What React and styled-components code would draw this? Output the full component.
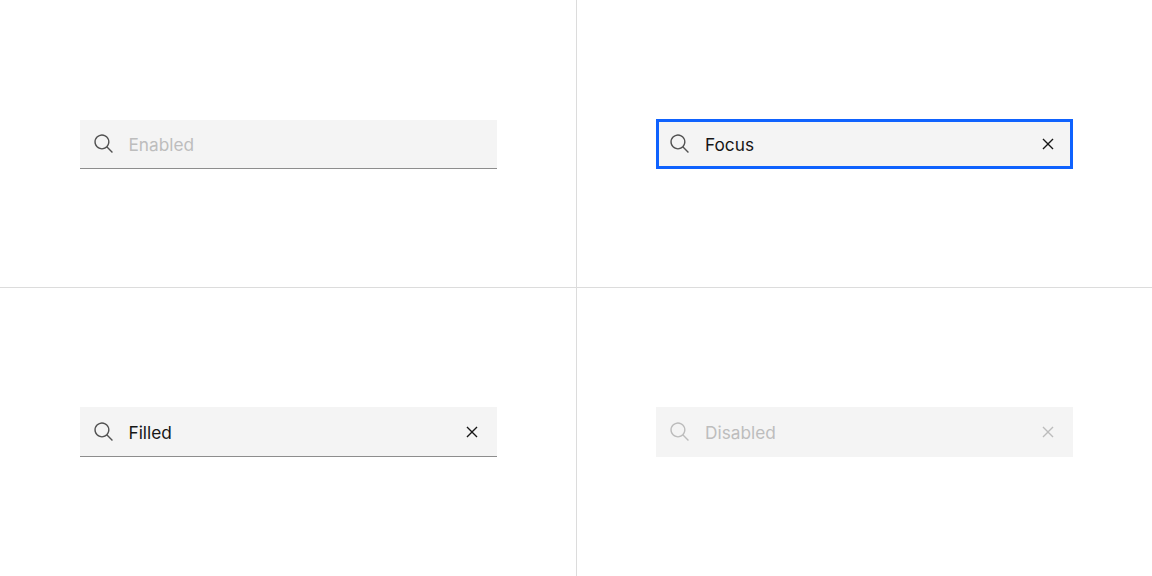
import styled, { createGlobalStyle } from "styled-components";

const GlobalStyle = createGlobalStyle`
  html, body {
    margin: 0;
    padding: 0;
    background: #fff;
    font-family: "Inter", "Liberation Sans", sans-serif;
  }
`;

const Board = styled.div`
  display: grid;
  grid-template-columns: 577px 575px;
  grid-template-rows: 288px 288px;
  width: 1152px;
  height: 576px;
  overflow: hidden;
`;

const Cell = styled.div`
  display: flex;
  align-items: center;
  justify-content: center;
  box-sizing: border-box;
  border-right: ${(p) => (p.$right ? "1px solid #dcdcdc" : "none")};
  border-bottom: ${(p) => (p.$bottom ? "1px solid #dcdcdc" : "none")};
  padding-top: ${(p) => (p.$bottom ? "1px" : "0")};
`;

const Field = styled.div`
  display: flex;
  align-items: center;
  box-sizing: border-box;
  width: 417px;
  height: ${(p) => (p.$tall ? "50px" : "49px")};
  padding: 0 14px 0 13px;
  background: #f4f4f4;
  box-shadow: ${(p) => (p.$underline ? "inset 0 -1px 0 #8d8d8d" : "none")};
  outline: ${(p) => (p.$focus ? "3px solid #0f62fe" : "none")};
  outline-offset: -3px;
`;

const SearchIcon = styled.svg`
  flex: none;
  width: 22px;
  height: 22px;
  fill: ${(p) => (p.$disabled ? "#bcbcbc" : "#525252")};
`;

const CloseIcon = styled.svg`
  flex: none;
  width: 22px;
  height: 22px;
  fill: ${(p) => (p.$disabled ? "#bcbcbc" : "#161616")};
`;

const Label = styled.span`
  flex: 1;
  margin-left: 14px;
  padding-top: 1px;
  font-size: 17.25px;
  line-height: 24px;
  color: ${(p) => (p.$muted ? "#bdbdbd" : "#161616")};
`;

const Search = ({ disabled }) => (
  <SearchIcon $disabled={disabled} viewBox="0 0 32 32">
    <path d="M29 27.586l-7.552-7.552a11.018 11.018 0 1 0-1.414 1.414L27.586 29zM4 13a9 9 0 1 1 9 9 9.01 9.01 0 0 1-9-9z" />
  </SearchIcon>
);

const Close = ({ disabled }) => (
  <CloseIcon $disabled={disabled} viewBox="0 0 32 32">
    <path d="M24 9.4L22.6 8 16 14.6 9.4 8 8 9.4 14.6 16 8 22.6 9.4 24 16 17.4 22.6 24 24 22.6 17.4 16 24 9.4z" />
  </CloseIcon>
);

const App = () => (
  <>
    <GlobalStyle />
    <Board>
      <Cell $right $bottom>
        <Field $underline>
          <Search />
          <Label $muted>Enabled</Label>
        </Field>
      </Cell>
      <Cell $bottom>
        <Field $focus $tall>
          <Search />
          <Label>Focus</Label>
          <Close />
        </Field>
      </Cell>
      <Cell $right>
        <Field $underline $tall>
          <Search />
          <Label>Filled</Label>
          <Close />
        </Field>
      </Cell>
      <Cell>
        <Field $tall>
          <Search disabled />
          <Label $muted>Disabled</Label>
          <Close disabled />
        </Field>
      </Cell>
    </Board>
  </>
);

export default App;
